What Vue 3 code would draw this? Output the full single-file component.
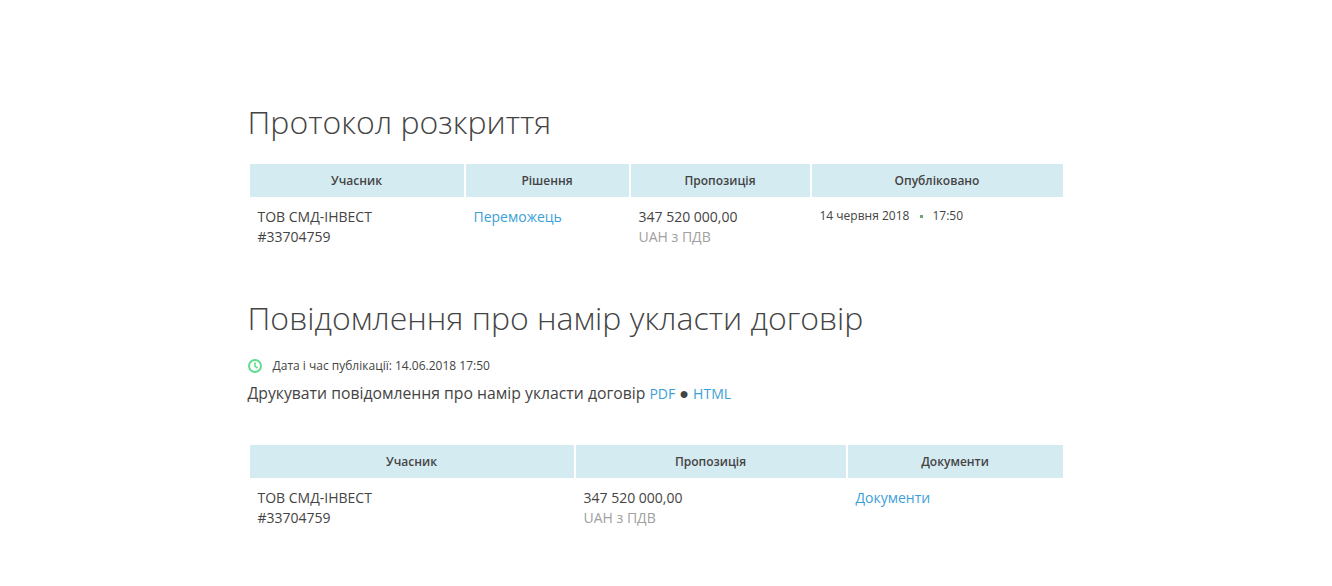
<script setup>
const bidColumns = ['Учасник', 'Рішення', 'Пропозиція', 'Опубліковано']
const noticeColumns = ['Учасник', 'Пропозиція', 'Документи']
</script>

<template>
  <div class="page">
    <h2 class="title">Протокол розкриття</h2>
    <table class="grid bids">
      <thead>
        <tr>
          <th v-for="col in bidColumns" :key="col">{{ col }}</th>
        </tr>
      </thead>
      <tbody>
        <tr>
          <td>ТОВ СМД-ІНВЕСТ<br>#33704759</td>
          <td><a class="link">Переможець</a></td>
          <td>347 520 000,00<br><span class="muted">UAH з ПДВ</span></td>
          <td class="published">
            <span>14 червня 2018</span><i class="dot"></i><span>17:50</span>
          </td>
        </tr>
      </tbody>
    </table>

    <h2 class="title second">Повідомлення про намір укласти договір</h2>
    <div class="date">
      <svg class="clock" width="14" height="14" viewBox="0 0 14 14" fill="none" stroke="#62dc8e" stroke-width="2">
        <circle cx="7" cy="7" r="6" />
        <path d="M7 3.4V7.4L9.6 9" stroke-width="1.6" />
      </svg>
      <span>Дата і час публікації: 14.06.2018 17:50</span>
    </div>
    <div class="print">
      Друкувати повідомлення про намір укласти договір
      <a class="link small">PDF</a> <span class="bullet">●</span> <a class="link small">HTML</a>
    </div>

    <table class="grid notice">
      <thead>
        <tr>
          <th v-for="col in noticeColumns" :key="col">{{ col }}</th>
        </tr>
      </thead>
      <tbody>
        <tr>
          <td>ТОВ СМД-ІНВЕСТ<br>#33704759</td>
          <td>347 520 000,00<br><span class="muted">UAH з ПДВ</span></td>
          <td><a class="link">Документи</a></td>
        </tr>
      </tbody>
    </table>
  </div>
</template>

<style>
html, body {
  background: #fff;
}
</style>

<style scoped>
.page {
  width: 817px;
  margin-left: 248px;
  padding-top: 100px;
  font-family: "Open Sans", "Liberation Sans", sans-serif;
  color: #444;
  font-size: 14px;
}

.title {
  margin: 0 0 0 -0.5px;
  font-size: 32px;
  font-weight: 300;
  line-height: 44px;
  color: #444;
}

.second {
  margin-top: 39px;
}

.grid {
  width: 817px;
  table-layout: fixed;
  border-collapse: separate;
  border-spacing: 2px;
}

.bids {
  margin-top: 18px;
}

.notice {
  margin-top: 38px;
}

th {
  height: 33px;
  padding: 0 1px 0 0;
  background: #d5ebf2;
  font-size: 12px;
  font-weight: 600;
  text-align: center;
  color: #444;
}

td {
  padding: 8px 8px 8px 7.5px;
  font-size: 14px;
  line-height: 20px;
  vertical-align: top;
}

.bids th:nth-child(1) { width: 213px; }
.bids th:nth-child(2) { width: 162px; }
.bids th:nth-child(3) { width: 178px; }

.notice th:nth-child(1) { width: 323px; }
.notice th:nth-child(2) { width: 269px; }

.link {
  color: #3c9fd8;
  cursor: pointer;
}

.small {
  font-size: 14px;
}

.muted {
  color: #a0a0a0;
}

.published {
  display: flex;
  align-items: center;
  font-size: 12px;
  line-height: 18px;
}

.dot {
  width: 3px;
  height: 3px;
  margin: 0 9px 0 11px;
  background: #6aa86f;
}

.date {
  display: flex;
  align-items: center;
  gap: 10.5px;
  margin-top: 17px;
  font-size: 12px;
  line-height: 18px;
}

.print {
  margin: 7px 0 0 -0.5px;
  font-size: 15.75px;
  line-height: 22px;
}

.bullet {
  font-size: 16px;
}
</style>
